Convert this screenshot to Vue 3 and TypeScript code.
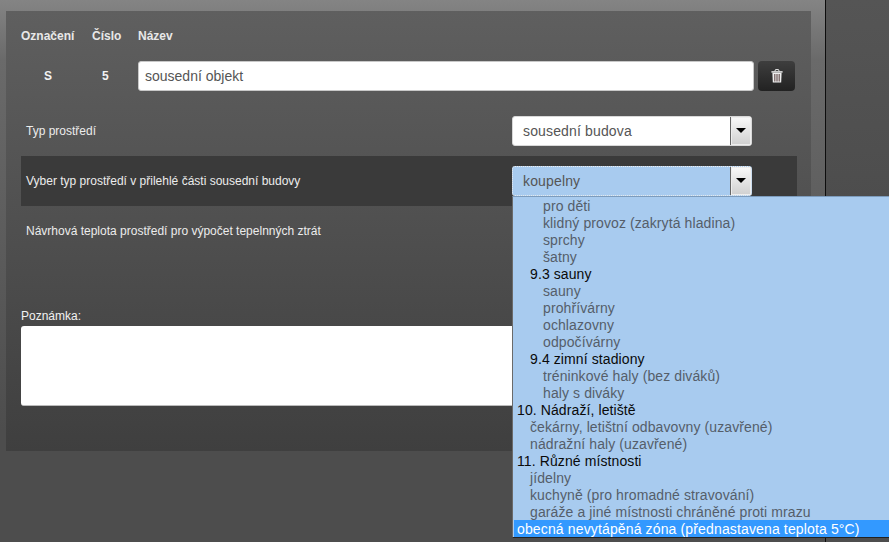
<script setup lang="ts">
interface Opt { t: string; l: number }
const opts: Opt[] = [
  { t: 'pro děti', l: 2 },
  { t: 'klidný provoz (zakrytá hladina)', l: 2 },
  { t: 'sprchy', l: 2 },
  { t: 'šatny', l: 2 },
  { t: '9.3 sauny', l: -1 },
  { t: 'sauny', l: 2 },
  { t: 'prohřívárny', l: 2 },
  { t: 'ochlazovny', l: 2 },
  { t: 'odpočívárny', l: 2 },
  { t: '9.4 zimní stadiony', l: -1 },
  { t: 'tréninkové haly (bez diváků)', l: 2 },
  { t: 'haly s diváky', l: 2 },
  { t: '10. Nádraží, letiště', l: 0 },
  { t: 'čekárny, letištní odbavovny (uzavřené)', l: 1 },
  { t: 'nádražní haly (uzavřené)', l: 1 },
  { t: '11. Různé místnosti', l: 0 },
  { t: 'jídelny', l: 1 },
  { t: 'kuchyně (pro hromadné stravování)', l: 1 },
  { t: 'garáže a jiné místnosti chráněné proti mrazu', l: 1 },
]
function cls(o: Opt) {
  if (o.l === 2) return 'opt lv2'
  if (o.l === 1) return 'opt lv1'
  if (o.l === -1) return 'opt grp lv1'
  return 'opt grp'
}
</script>

<template>
  <div class="page">
    <main class="main">
      <section class="panel">
        <div class="head">
          <span class="c1">Označení</span>
          <span class="c2">Číslo</span>
          <span class="c3">Název</span>
        </div>
        <div class="namerow">
          <span class="c1 val">S</span>
          <span class="c2 val">5</span>
          <div class="input">sousední objekt</div>
          <button class="trash" aria-label="Smazat">
            <svg width="12" height="14" viewBox="0 0 12 14">
              <path d="M3.8 2.4 L4.5 .6 H7.5 L8.2 2.4" fill="none" stroke="#eee" stroke-width="1" />
              <rect x=".4" y="2.2" width="11.2" height="1.4" fill="#eee" />
              <path d="M1.4 3.8 H10.6 L10.2 13.6 H1.8 Z" fill="#eee" />
              <path d="M3.8 5 V12.4 M6 5 V12.4 M8.2 5 V12.4" stroke="#6a5555" stroke-width="1.2" />
            </svg>
          </button>
        </div>
        <div class="row r-type">
          <span class="lbl">Typ prostředí</span>
          <div class="select">
            <span class="sel-text">sousední budova</span>
            <span class="arrow"><i></i></span>
          </div>
        </div>
        <div class="row r-dark">
          <span class="lbl">Vyber typ prostředí v přilehlé části sousední budovy</span>
          <div class="select focus">
            <span class="sel-text">koupelny</span>
            <span class="arrow"><i></i></span>
          </div>
        </div>
        <div class="row r-temp">
          <span class="lbl">Návrhová teplota prostředí pro výpočet tepelnných ztrát</span>
        </div>
        <div class="note-l">Poznámka:</div>
        <div class="note"></div>
      </section>
    </main>
    <aside class="side"></aside>
    <ul class="drop">
      <li v-for="o in opts" :key="o.t" :class="cls(o)">{{ o.t }}</li>
      <li class="opt sel">obecná nevytápěná zóna (přednastavena teplota 5°C)</li>
    </ul>
  </div>
</template>

<style>
html, body { margin: 0; padding: 0; background: #4d4d4d; }
</style>

<style scoped>
.page {
  position: relative;
  width: 889px;
  height: 542px;
  overflow: hidden;
  display: flex;
  font-family: "Liberation Sans", Arial, sans-serif;
  background: #4d4d4d;
}
.main {
  flex: none;
  width: 826px;
  height: 542px;
  box-sizing: border-box;
  padding: 11px 14px 0 6px;
  background: linear-gradient(to bottom, #848484 0, #6a6a6a 60px, #4d4d4d 430px);
  border-right: 1px solid #0d0d0d;
}
.side {
  flex: 1;
  background: linear-gradient(to bottom, #555 0, #4d4d4d 200px);
}
.panel {
  width: 805px;
  height: 440px;
  box-sizing: border-box;
  padding: 0 14px 0 15px;
  background: linear-gradient(to bottom, #5f5f5f 0, #3f3f3f 100%);
}
.head {
  display: flex;
  padding-top: 18px;
  height: 50px;
  box-sizing: border-box;
  align-items: flex-start;
  color: #e8e8e8;
  font-weight: 700;
  font-size: 12px;
  line-height: 14px;
}
.c1 { width: 71px; flex: none; }
.c2 { width: 46px; flex: none; }
.c3 { flex: none; }
.namerow {
  display: flex;
  align-items: center;
  height: 30px;
}
.val {
  color: #f2f2f2;
  font-weight: 700;
  font-size: 12px;
  box-sizing: border-box;
}
.namerow .c1 { padding-left: 23px; }
.namerow .c2 { padding-left: 10px; }
.input {
  width: 616px;
  height: 30px;
  box-sizing: border-box;
  background: #fff;
  border-radius: 3px;
  border: 1px solid #c8c8c8;
  color: #555;
  font-size: 14px;
  line-height: 28px;
  padding-left: 6px;
}
.trash {
  margin-left: 4px;
  width: 37px;
  height: 30px;
  padding: 0;
  border: 0;
  border-radius: 4px;
  background: linear-gradient(to bottom, #3e3e3e, #222);
  display: flex;
  align-items: center;
  justify-content: center;
}
.row {
  display: flex;
  align-items: center;
  justify-content: space-between;
  box-sizing: border-box;
}
.lbl {
  color: #ececec;
  font-size: 12px;
  padding-left: 5px;
}
.r-type { height: 30px; margin-top: 25px; padding-right: 45px; }
.r-dark {
  height: 50px;
  margin-top: 10px;
  background: #3a3a3a;
  width: 776px;
  padding-right: 45px;
}
.r-temp { height: 50px; }
.select {
  width: 240px;
  height: 30px;
  box-sizing: border-box;
  background: #fff;
  border: 1px solid #d8d8d8;
  border-radius: 3px;
  display: flex;
  align-items: center;
  color: #555;
  font-size: 14px;
  letter-spacing: .15px;
}
.select.focus {
  background: #a8cbef;
  border: 1px dotted #eee;
}
.sel-text { flex: 1; padding-left: 10px; }
.arrow {
  width: 21px;
  height: 28px;
  background: linear-gradient(to bottom, #fafafa, #d0d0d0);
  border-left: 1px solid #666;
  box-shadow: inset 0 0 0 1px #eee;
  display: flex;
  justify-content: center;
  padding-top: 11px;
  box-sizing: border-box;
}
.arrow i {
  width: 0;
  height: 0;
  border-left: 5px solid transparent;
  border-right: 5px solid transparent;
  border-top: 5px solid #000;
}
.note-l {
  margin-top: 53px;
  color: #f2f2f2;
  font-size: 12px;
  line-height: 14px;
  height: 17px;
}
.note {
  width: 600px;
  height: 80px;
  background: #fff;
  border-radius: 3px;
  border-bottom: 1px solid #bbb;
  box-sizing: border-box;
}
.drop {
  position: absolute;
  left: 512px;
  top: 196px;
  width: 377px;
  height: 342px;
  box-sizing: border-box;
  margin: 0;
  padding: 0 0 0 1px;
  list-style: none;
  background: #a8cbef;
  border-top: 1px solid #7d9cbd;
  border-left: 1px solid #6a6a6a;
  border-bottom: 1px solid #222;
  font-size: 14px;
  letter-spacing: .1px;
}
.opt {
  height: 17px;
  line-height: 19px;
  color: #555e6a;
  padding-left: 3px;
  white-space: nowrap;
}
.lv1 { padding-left: 16px; }
.lv2 { padding-left: 29px; }
.grp { color: #0a0a0a; }
.sel { background: #3399ff; color: #fff; letter-spacing: .14px; }
</style>
